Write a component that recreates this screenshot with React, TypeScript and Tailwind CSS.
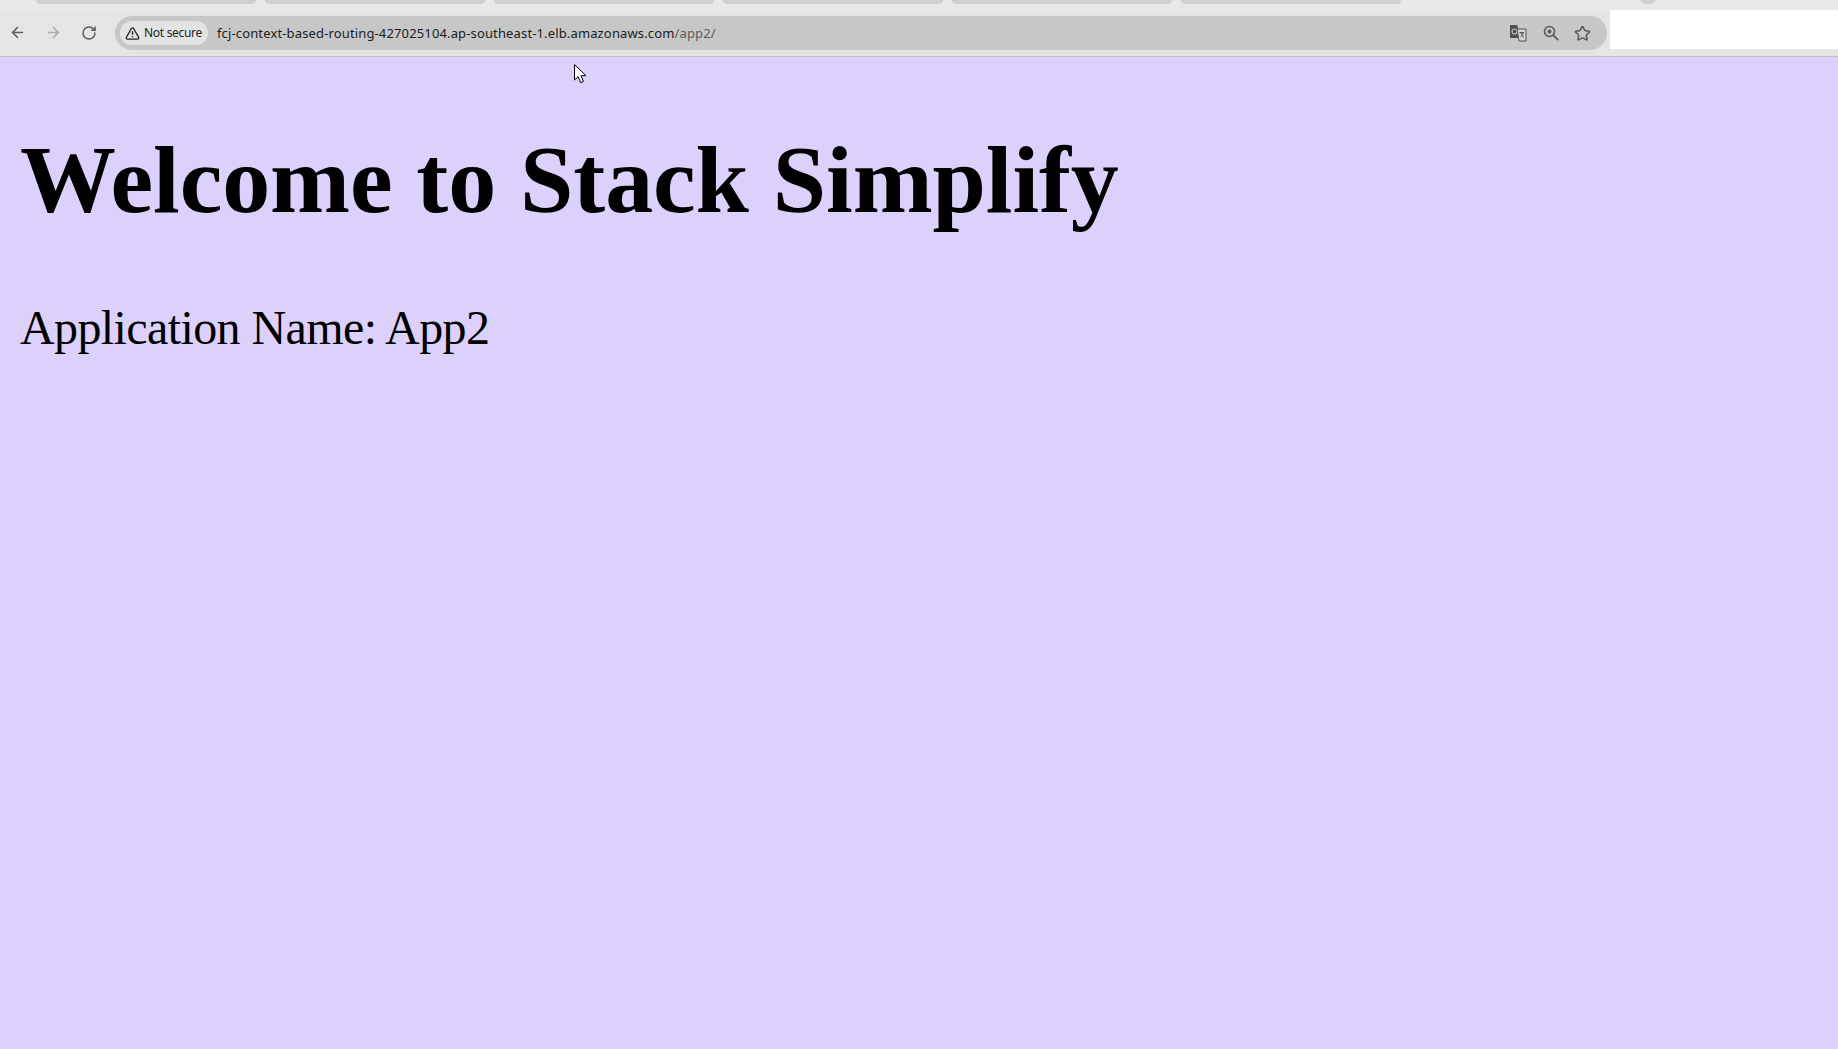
import { ArrowLeft, ArrowRight, RotateCw, Star, TriangleAlert } from 'lucide-react';

const TAB_IDS = [1, 2, 3, 4, 5, 6];

function TranslateIcon() {
  return (
    <svg width="18" height="18" viewBox="0 0 18 18" className="shrink-0">
      <path d="M1 1h7l1 3 3 10H1z" fill="#4f4f4f" />
      <circle cx="5.500" cy="7.500" r="2.500" fill="none" stroke="#c8c8c8" strokeWidth="1.200" />
      <path d="M8 5h9v12H10z" fill="#d4d4d4" stroke="#555" strokeWidth="1" />
      <path d="M10.500 8.500h4.500M11.500 8.500l3 5M14.500 8.500c-.4 2-1.400 3.500-3 4.500" fill="none" stroke="#555" strokeWidth="1" />
    </svg>
  );
}

function ZoomIcon() {
  return (
    <svg width="16" height="16" viewBox="0 0 16 16" className="shrink-0">
      <circle cx="6.500" cy="6.500" r="5" fill="none" stroke="#5a5a5a" strokeWidth="1.600" />
      <circle cx="6.500" cy="6.500" r="2" fill="#5a5a5a" />
      <path d="M10.200 10.200l5 5" stroke="#5a5a5a" strokeWidth="1.800" />
    </svg>
  );
}

function Cursor() {
  return (
    <svg width="13" height="20" viewBox="0 0 13 20" className="absolute left-[574px] top-[64px]">
      <path d="M.5.500v15.500l3.700-3.300 2.500 6 2.800-1.200-2.500-5.800h5z" fill="#fff" stroke="#000" strokeWidth="1" />
    </svg>
  );
}

export default function App() {
  return (
    <div className="relative flex min-h-[1049px] flex-col bg-[#dcd1fc]">
      {/* browser chrome */}
      <div className="h-[57px] shrink-0 border-b border-[#c2c2c2] bg-[#e5e5e5]">
        <div className="flex h-[10px] items-start gap-[9px] bg-[#e8e8e8] pl-[36px]">
          {TAB_IDS.map((id) => (
            <div key={id} className="h-[4px] w-[220px] rounded-b-[8px] bg-[#cfcfcf]" />
          ))}
          <div className="ml-[227px] h-[4px] w-[22px] overflow-hidden">
            <div className="-mt-[18px] h-[22px] w-[22px] rounded-full bg-[#cfcfcf]" />
          </div>
        </div>

        <div className="flex items-start">
          <div className="flex h-[46px] w-[115px] shrink-0 items-center pb-[1px] pl-[9px] text-[#5c5c5c]">
            <ArrowLeft size={17} strokeWidth={2.200} />
            <ArrowRight size={17} strokeWidth={2.200} className="ml-[19px] text-[#ababab]" />
            <RotateCw size={16} strokeWidth={2.200} className="ml-[19px]" />
          </div>

          <div className="mt-[6px] flex h-[34px] w-[1492px] shrink-0 items-center rounded-full bg-[#c7c7c7] pl-[5px] pr-[16px] font-['Noto_Sans',sans-serif]">
            <div className="flex h-[24px] w-[88px] shrink-0 items-center gap-[4px] rounded-full bg-[#e3e3e3] pl-[5px] text-[12px] tracking-[-0.3px] text-[#222]">
              <TriangleAlert size={15} strokeWidth={2.200} />
              <span>Not secure</span>
            </div>
            <div className="ml-[9px] flex-1 whitespace-nowrap pt-[1px] text-[13px] tracking-[0.14px] text-[#1c1c1c]">
              fcj-context-based-routing-427025104.ap-southeast-1.elb.amazonaws.com
              <span className="text-[#5c5c5c]">/app2/</span>
            </div>
            <div className="flex items-center gap-[16px] text-[#5a5a5a]">
              <TranslateIcon />
              <ZoomIcon />
              <Star size={17} strokeWidth={2.200} className="-ml-[1px]" />
            </div>
          </div>

          <div className="ml-[3px] h-[39px] flex-1 bg-white" />
        </div>
      </div>

      {/* page content */}
      <div className="px-[20px] font-['Liberation_Serif',serif] text-black">
        <h1 className="mt-[68px] text-[96px] leading-[110px] font-bold tracking-[-0.1px]">Welcome to Stack Simplify</h1>
        <p className="mt-[65px] text-[48px] leading-[55px] tracking-[-0.6px]">Application Name: App2</p>
      </div>

      <Cursor />
    </div>
  );
}
